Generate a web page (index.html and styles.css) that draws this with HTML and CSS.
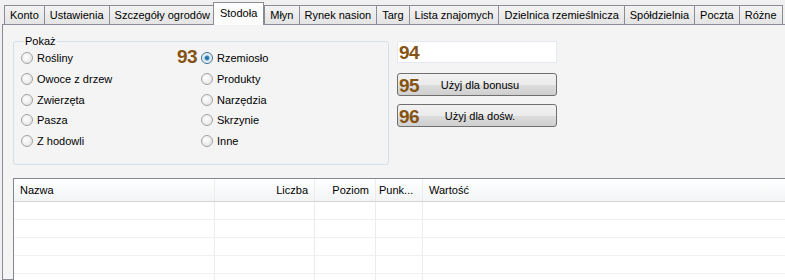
FILE: index.html
```html
<!DOCTYPE html>
<html lang="pl">
<head>
    <meta charset="UTF-8">
    <title>Stodoła</title>
    <link rel="stylesheet" href="styles.css">
</head>
<body>
    <div class="tabs">
        <div class="tab">Konto</div>
        <div class="tab">Ustawienia</div>
        <div class="tab">Szczegóły ogrodów</div>
        <div class="tab active">Stodoła</div>
        <div class="tab">Młyn</div>
        <div class="tab">Rynek nasion</div>
        <div class="tab">Targ</div>
        <div class="tab">Lista znajomych</div>
        <div class="tab">Dzielnica rzemieślnicza</div>
        <div class="tab">Spółdzielnia</div>
        <div class="tab">Poczta</div>
        <div class="tab">Różne</div>
    </div>

    <div class="panel">
        <div class="top">
            <fieldset class="group">
                <legend>Pokaż</legend>
                <div class="col">
                    <label class="radio"><span class="dot"></span>Rośliny</label>
                    <label class="radio"><span class="dot"></span>Owoce z drzew</label>
                    <label class="radio"><span class="dot"></span>Zwierzęta</label>
                    <label class="radio"><span class="dot"></span>Pasza</label>
                    <label class="radio"><span class="dot"></span>Z hodowli</label>
                </div>
                <div class="col">
                    <label class="radio"><span class="num num-93">93</span><span class="dot checked"></span>Rzemiosło</label>
                    <label class="radio"><span class="dot"></span>Produkty</label>
                    <label class="radio"><span class="dot"></span>Narzędzia</label>
                    <label class="radio"><span class="dot"></span>Skrzynie</label>
                    <label class="radio"><span class="dot"></span>Inne</label>
                </div>
            </fieldset>

            <div class="actions">
                <div class="textbox"><span class="num">94</span></div>
                <button class="btn"><span class="num">95</span>Użyj dla bonusu</button>
                <button class="btn"><span class="num">96</span>Użyj dla dośw.</button>
            </div>
        </div>

        <div class="grid">
            <div class="row head">
                <div class="cell c-name">Nazwa</div>
                <div class="cell c-count right">Liczba</div>
                <div class="cell c-level right">Poziom</div>
                <div class="cell c-points">Punk...</div>
                <div class="cell c-value">Wartość</div>
            </div>
            <div class="row"><div class="cell c-name"></div><div class="cell c-count"></div><div class="cell c-level"></div><div class="cell c-points"></div><div class="cell c-value"></div></div>
            <div class="row"><div class="cell c-name"></div><div class="cell c-count"></div><div class="cell c-level"></div><div class="cell c-points"></div><div class="cell c-value"></div></div>
            <div class="row"><div class="cell c-name"></div><div class="cell c-count"></div><div class="cell c-level"></div><div class="cell c-points"></div><div class="cell c-value"></div></div>
            <div class="row"><div class="cell c-name"></div><div class="cell c-count"></div><div class="cell c-level"></div><div class="cell c-points"></div><div class="cell c-value"></div></div>
            <div class="row"><div class="cell c-name"></div><div class="cell c-count"></div><div class="cell c-level"></div><div class="cell c-points"></div><div class="cell c-value"></div></div>
        </div>
    </div>
</body>
</html>
```

FILE: styles.css
```css
body {
    margin: 0;
    background-color: #f0f0f0;
    font-family: "Liberation Sans", Arial, sans-serif;
    font-size: 11px;
    color: #000000;
    overflow: hidden;
    height: 280px;
}

/* tab strip */
.tabs {
    display: flex;
    align-items: flex-end;
    padding: 0 0 0 4px;
    height: 24px;
}
.tab {
    height: 18px;
    line-height: 18px;
    padding: 0 5px;
    border: 1px solid #898c95;
    border-bottom: none;
    margin-right: -1px;
    background: linear-gradient(#f3f3f3, #e4e4e4);
    white-space: nowrap;
}
.tab.active {
    height: 22px;
    line-height: 20px;
    padding: 0 6px;
    margin: 0 0 -1px -2px;
    background: #fcfcfc;
    position: relative;
    z-index: 1;
}

.panel {
    margin-left: 2px;
    margin-right: -4px;
    height: 256px;
    box-sizing: border-box;
    border: 1px solid #898c95;
    background-color: #f4f4f4;
    padding: 10px 0 0 10px;
}

.top {
    display: flex;
    gap: 8px;
}

/* group box */
.group {
    box-sizing: border-box;
    width: 376px;
    min-width: 0;
    height: 130px;
    margin: 0;
    padding: 1px 0 0 7px;
    border: 1px solid #d5dfe5;
    border-radius: 3px;
    display: flex;
}
.group legend {
    padding: 0 1px;
    margin-left: 3px;
}
.col {
    display: flex;
    flex-direction: column;
    width: 180px;
}
.radio {
    display: flex;
    align-items: center;
    height: 20.7px;
    position: relative;
}
.dot {
    width: 12px;
    height: 12px;
    border: 1px solid #a2a2a2;
    border-radius: 50%;
    background: radial-gradient(circle at 40% 40%, #ffffff, #dedede);
    margin-right: 4px;
    box-sizing: border-box;
    flex-shrink: 0;
}
.dot.checked {
    border-color: #3d6f94;
    background: radial-gradient(circle, #1d5d88 0, #3f8fc2 2px, #d7e8f2 3px, #f4f4f4 5px);
}

/* annotation numbers */
.num {
    position: absolute;
    left: 1px;
    top: 0;
    font-family: "Liberation Sans", sans-serif;
    font-weight: bold;
    font-size: 19px;
    line-height: 22px;
    letter-spacing: -0.5px;
    color: #855313;
}
.num-93 {
    left: -24px;
    top: -2px;
}

/* right side */
.actions {
    width: 160px;
    display: flex;
    flex-direction: column;
    gap: 8px;
    padding-top: 6px;
}
.textbox {
    height: 22px;
    background: #ffffff;
    border: 1px solid #e3e9ef;
    box-sizing: border-box;
    position: relative;
    margin-bottom: 2px;
}
.btn {
    position: relative;
    height: 23px;
    font-family: inherit;
    font-size: 11px;
    border: 1px solid #707070;
    border-radius: 3px;
    background: linear-gradient(#f2f2f2 0, #ebebeb 50%, #dddddd 51%, #cfcfcf 100%);
    padding: 0 0 0 6px;
}
.btn .num {
    left: 1px;
    top: 1px;
}

/* list view */
.grid {
    margin-top: 13px;
    border: 1px solid #828790;
    background: #ffffff;
    height: 110px;
}
.row {
    display: flex;
    height: 17px;
    border-bottom: 1px solid #f0f0f0;
}
.row.head {
    height: 22px;
    line-height: 22px;
    border-bottom: 1px solid #d5d5d5;
    background: linear-gradient(#ffffff, #f3f4f6);
}
.cell {
    border-right: 1px solid #ececec;
    padding: 0 6px;
    box-sizing: border-box;
}
.right {
    text-align: right;
}
.c-name { width: 201px; }
.c-count { width: 100px; }
.c-level { width: 61px; }
.c-points { width: 47px; padding: 0 3px; }
.c-value { flex: 1; border-right: none; }
```
